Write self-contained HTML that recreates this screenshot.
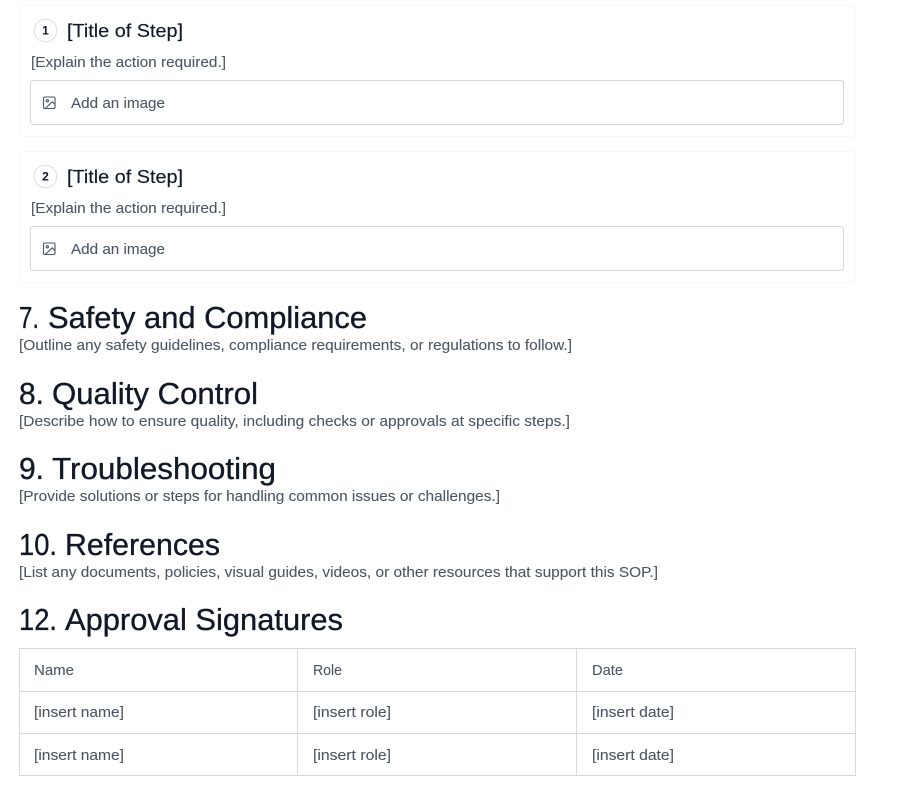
<!DOCTYPE html>
<html lang="en">
<head>
<meta charset="utf-8">
<title>SOP</title>
<style>
html,body{margin:0;padding:0;background:#fff;width:904px;height:801px;overflow:hidden}
svg{display:block;position:absolute;left:0;top:0}
text{font-family:"Liberation Sans",sans-serif}
.h{font-size:30.5px;fill:#111827;stroke:#111827;stroke-width:.35}
.t{font-size:18.5px;fill:#111827;stroke:#111827;stroke-width:.15}
.p{font-size:14.8px;fill:#4b5563;stroke:#4b5563;stroke-width:.08}
.n{font-size:12px;font-weight:700;fill:#111827;text-anchor:middle}
.c{fill:#fff;stroke:#f8f8fa;stroke-width:1}
.i{fill:#fff;stroke:#d4d6dc;stroke-width:1}
.l{stroke:#d6d8e0;stroke-width:1;fill:none}
.ic{fill:none;stroke:#4b5563;stroke-width:1.1;stroke-linecap:round;stroke-linejoin:round}
</style>
</head>
<body>
<svg width="904" height="801" viewBox="0 0 904 801" xmlns="http://www.w3.org/2000/svg">
<rect class="c" x="19.5" y="5.5" width="836" height="131" rx="4"/>
<circle cx="45.5" cy="30.5" r="11.3" fill="#fff" stroke="#dcdee2"/>
<text class="n" x="45.5" y="34.5">1</text>
<text class="t" x="67" y="37" textLength="116" lengthAdjust="spacingAndGlyphs">[Title of Step]</text>
<text class="p" x="31" y="67" textLength="195" lengthAdjust="spacingAndGlyphs">[Explain the action required.]</text>
<rect class="i" x="30.5" y="80.5" width="813" height="44" rx="3"/>
<g class="ic" transform="translate(43,96.5)"><rect x="0.5" y="0.5" width="11.5" height="11.5" rx="1.3"/><circle cx="4.3" cy="4.3" r="1.1"/><path d="M12 8 9.2 5.3 2.2 12"/></g>
<text class="p" x="71" y="108" textLength="94" lengthAdjust="spacingAndGlyphs">Add an image</text>

<rect class="c" x="19.5" y="151.5" width="836" height="131" rx="4"/>
<circle cx="45.5" cy="176.5" r="11.3" fill="#fff" stroke="#dcdee2"/>
<text class="n" x="45.5" y="180.5">2</text>
<text class="t" x="67" y="183" textLength="116" lengthAdjust="spacingAndGlyphs">[Title of Step]</text>
<text class="p" x="31" y="213" textLength="195" lengthAdjust="spacingAndGlyphs">[Explain the action required.]</text>
<rect class="i" x="30.5" y="226.5" width="813" height="44" rx="3"/>
<g class="ic" transform="translate(43,242.5)"><rect x="0.5" y="0.5" width="11.5" height="11.5" rx="1.3"/><circle cx="4.3" cy="4.3" r="1.1"/><path d="M12 8 9.2 5.3 2.2 12"/></g>
<text class="p" x="71" y="254" textLength="94" lengthAdjust="spacingAndGlyphs">Add an image</text>

<text class="h" x="19" y="328" textLength="20" lengthAdjust="spacingAndGlyphs">7.</text>
<text class="h" x="48" y="328" textLength="319" lengthAdjust="spacingAndGlyphs">Safety and Compliance</text>
<text class="p" x="19" y="350" textLength="553" lengthAdjust="spacingAndGlyphs">[Outline any safety guidelines, compliance requirements, or regulations to follow.]</text>
<text class="h" x="19" y="404" textLength="25" lengthAdjust="spacingAndGlyphs">8.</text>
<text class="h" x="52" y="404" textLength="206" lengthAdjust="spacingAndGlyphs">Quality Control</text>
<text class="p" x="19" y="426" textLength="551" lengthAdjust="spacingAndGlyphs">[Describe how to ensure quality, including checks or approvals at specific steps.]</text>
<text class="h" x="19" y="479" textLength="25" lengthAdjust="spacingAndGlyphs">9.</text>
<text class="h" x="52" y="479" textLength="224" lengthAdjust="spacingAndGlyphs">Troubleshooting</text>
<text class="p" x="19" y="501" textLength="481" lengthAdjust="spacingAndGlyphs">[Provide solutions or steps for handling common issues or challenges.]</text>
<text class="h" x="19" y="555" textLength="38" lengthAdjust="spacingAndGlyphs">10.</text>
<text class="h" x="65" y="555" textLength="155" lengthAdjust="spacingAndGlyphs">References</text>
<text class="p" x="19" y="577" textLength="639" lengthAdjust="spacingAndGlyphs">[List any documents, policies, visual guides, videos, or other resources that support this SOP.]</text>
<text class="h" x="19" y="630" textLength="38" lengthAdjust="spacingAndGlyphs">12.</text>
<text class="h" x="65" y="630" textLength="278" lengthAdjust="spacingAndGlyphs">Approval Signatures</text>

<rect class="l" x="19.5" y="648.5" width="836" height="127"/>
<path class="l" d="M19.5 691.5H855.5M19.5 733.5H855.5M297.5 648.5V775.5M576.5 648.5V775.5"/>
<text class="p" x="34" y="675" textLength="40" lengthAdjust="spacingAndGlyphs">Name</text>
<text class="p" x="313" y="675" textLength="29" lengthAdjust="spacingAndGlyphs">Role</text>
<text class="p" x="592" y="675" textLength="31" lengthAdjust="spacingAndGlyphs">Date</text>
<text class="p" x="34" y="717" textLength="90" lengthAdjust="spacingAndGlyphs">[insert name]</text>
<text class="p" x="313" y="717" textLength="78" lengthAdjust="spacingAndGlyphs">[insert role]</text>
<text class="p" x="592" y="717" textLength="82" lengthAdjust="spacingAndGlyphs">[insert date]</text>
<text class="p" x="34" y="760" textLength="90" lengthAdjust="spacingAndGlyphs">[insert name]</text>
<text class="p" x="313" y="760" textLength="78" lengthAdjust="spacingAndGlyphs">[insert role]</text>
<text class="p" x="592" y="760" textLength="82" lengthAdjust="spacingAndGlyphs">[insert date]</text>
</svg>
</body>
</html>
